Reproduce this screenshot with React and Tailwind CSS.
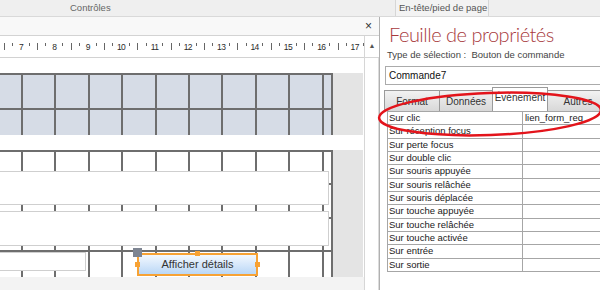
import React from "react";

const units = [null, 7, 8, 9, 10, 11, 12, 13, 14, 15, 16, 17];

function Ruler() {
  return (
    <div className="h-[22px] bg-white border-b border-[#d2d2d2] overflow-hidden">
      <div className="flex h-full ml-[-16.6px]">
        {units.map((u, i) => (
          <div key={i} className="flex h-full shrink-0">
            <div className="w-[8.35px] shrink-0 flex justify-center pt-[6px] text-[8.5px] leading-[10px] text-[#2a2a2a] tracking-[-0.6px] whitespace-nowrap">
              {u}
            </div>
            <div className="w-[8.35px] shrink-0 flex justify-center pt-[7px]">
              <div className="w-px h-[3px] bg-[#666]" />
            </div>
            <div className="w-[8.35px] shrink-0 flex justify-center pt-[7px]">
              <div className="w-px h-[7px] bg-[#666]" />
            </div>
            <div className="w-[8.35px] shrink-0 flex justify-center pt-[7px]">
              <div className="w-px h-[3px] bg-[#666]" />
            </div>
          </div>
        ))}
      </div>
    </div>
  );
}

function Cells() {
  return (
    <div className="flex h-full">
      <div className="w-[21px] shrink-0" />
      {Array.from({ length: 9 }).map((_, i) => (
        <div key={i} className="w-[33.4px] shrink-0 border-l-2 border-[#6e6e6e]" />
      ))}
      <div className="w-[11.6px] shrink-0 border-x-2 border-[#6e6e6e]" />
    </div>
  );
}

const props = [
  ["Sur clic", "lien_form_req"],
  ["Sur réception focus", ""],
  ["Sur perte focus", ""],
  ["Sur double clic", ""],
  ["Sur souris appuyée", ""],
  ["Sur souris relâchée", ""],
  ["Sur souris déplacée", ""],
  ["Sur touche appuyée", ""],
  ["Sur touche relâchée", ""],
  ["Sur touche activée", ""],
  ["Sur entrée", ""],
  ["Sur sortie", ""],
];

export default function App() {
  return (
    <div className="relative w-[600px] h-[290px] overflow-hidden bg-[#f0f0f0] font-['Liberation_Sans',sans-serif] text-[#222]">
      {/* top strip */}
      <div className="flex h-[17px] border-b border-[#d9d9d9] bg-[#efefef]">
        <div className="w-[395px] shrink-0 pl-[70px] text-[9.5px] leading-[16px] text-[#666]">Contrôles</div>
        <div className="w-[94px] shrink-0 border-x border-[#d6d6d6] bg-[#f3f3f3] pl-[3px] text-[9.5px] leading-[16px] text-[#555] whitespace-nowrap">
          En-tête/pied de page
        </div>
      </div>

      <div className="flex h-[273px]">
        {/* left designer panel */}
        <div className="w-[379px] shrink-0 flex flex-col bg-white">
          <div className="h-[19px] shrink-0 bg-[#f8f8f8] border-b border-[#d3d3d3] flex items-center justify-end pr-[7px] text-[12px] leading-none text-[#333]">
            ×
          </div>
          <div className="flex flex-1 min-h-0">
            <div className="w-[364px] shrink-0 flex flex-col overflow-hidden">
              <Ruler />
              <div className="h-[15px] shrink-0 bg-white" />
              {/* section 1 */}
              <div className="flex h-[62px] shrink-0">
                <div className="w-[333px] shrink-0 bg-[#d6dce6] overflow-hidden">
                  <div className="h-[35px] border-t-2 border-[#6e6e6e]">
                    <Cells />
                  </div>
                  <div className="h-[27px] border-t-2 border-[#6e6e6e]">
                    <Cells />
                  </div>
                </div>
                <div className="flex-1 bg-[#e4e4e4] mr-[1px]" />
              </div>
              <div className="h-[15px] shrink-0 bg-white" />
              {/* section 2 */}
              <div className="flex h-[127px] shrink-0">
                <div className="relative w-[333px] shrink-0 bg-white">
                  <div className="overflow-hidden h-full">
                    <div className="h-[33.4px] border-t-2 border-[#6e6e6e]"><Cells /></div>
                    <div className="h-[33.4px] border-t-2 border-[#6e6e6e]"><Cells /></div>
                    <div className="h-[33.4px] border-t-2 border-[#6e6e6e]"><Cells /></div>
                    <div className="h-[26.8px] border-t-2 border-[#6e6e6e]"><Cells /></div>
                  </div>
                  {/* controls on the design canvas */}
                  <div className="absolute left-[-2px] top-[21px] w-[331px] h-[34px] border border-[#cfcfcf] bg-white" />
                  <div className="absolute left-[-2px] top-[61px] w-[331px] h-[35px] border border-[#cfcfcf] bg-white" />
                  <div className="absolute left-[-2px] top-[102px] w-[88px] h-[19px] border border-[#cfcfcf] bg-white" />
                  <div className="absolute left-[137px] top-[103px] w-[121px] h-[23px] border-2 border-[#f7a234] bg-gradient-to-b from-[#f3f8fe] to-[#bad7f6] flex items-center justify-center text-[11px] text-[#333]">
                    Afficher détails
                  </div>
                  <div className="absolute left-[133px] top-[98px] w-[9px] h-[9px] bg-[#7e8592]" />
                  <div className="absolute left-[195px] top-[101px] w-[5px] h-[5px] bg-[#f7a234]" />
                  <div className="absolute left-[135px] top-[112px] w-[5px] h-[5px] bg-[#f7a234]" />
                  <div className="absolute left-[255px] top-[112px] w-[5px] h-[5px] bg-[#f7a234]" />
                </div>
                <div className="flex-1 bg-[#e4e4e4] mr-[1px]" />
              </div>
              <div className="flex-1 bg-[#f3f3f3]" />
            </div>
            {/* scrollbar */}
            <div className="flex-1 flex flex-col border-l border-[#d6d6d6] bg-white">
              <div className="h-[22px] shrink-0 border-b border-[#d6d6d6] flex items-center justify-center text-[7px] text-[#555]">
                ▲
              </div>
              <div className="flex-1 border-r border-[#dcdcdc]" />
            </div>
          </div>
        </div>

        {/* property sheet */}
        <div className="flex-1 bg-white border-l border-[#b0b0b0] pl-[5px] overflow-hidden">
          <div className="pt-[5px] pl-[4px] text-[20px] leading-[25px] tracking-[-0.5px] text-[#a83a3d] font-light font-['Lato',sans-serif] whitespace-nowrap">
            Feuille de propriétés
          </div>
          <div className="mt-[2px] pl-[2px] text-[9.5px] leading-[12px] text-[#444] whitespace-nowrap">
            Type de sélection :&nbsp; Bouton de commande
          </div>
          <div className="mt-[5px] h-[19px] w-[230px] border border-[#ababab] pl-[3px] text-[10px] leading-[17px] text-[#111]">
            Commande7
          </div>
          <div className="mt-[2px] ml-[-1px] flex items-end h-[24px] text-[10px] text-[#333]">
            <div className="w-[55px] h-[21px] shrink-0 border-l border-t border-[#9a9a9a] bg-gradient-to-b from-[#f2f2f2] to-[#d8d8d8] flex items-center justify-center">
              Format
            </div>
            <div className="w-[53px] h-[21px] shrink-0 border-l border-t border-[#9a9a9a] bg-gradient-to-b from-[#f2f2f2] to-[#d8d8d8] flex items-center justify-center">
              Données
            </div>
            <div className="w-[56px] h-[24px] shrink-0 border-x border-t border-[#9a9a9a] bg-white flex items-start pt-[2px] justify-center">
              Événement
            </div>
            <div className="w-[60px] h-[21px] shrink-0 border-t border-[#9a9a9a] bg-gradient-to-b from-[#f2f2f2] to-[#d8d8d8] flex items-center justify-center">
              Autres
            </div>
          </div>
          <div className="ml-[2px] w-[230px] border-t border-l border-[#a6a6a6]">
            {props.map(([k, v]) => (
              <div key={k} className="flex h-[13.35px] border-b border-[#a6a6a6]">
                <div className="w-[135px] shrink-0 border-r border-[#a6a6a6] pl-[1px] text-[9.5px] leading-[12.5px] text-[#1a1a1a] whitespace-nowrap">
                  {k}
                </div>
                <div className="flex-1 pl-[2px] text-[9.5px] leading-[12.5px] text-[#1a1a1a] whitespace-nowrap">{v}</div>
              </div>
            ))}
          </div>
        </div>
      </div>

      <svg className="absolute left-0 top-0 pointer-events-none" width="600" height="290" viewBox="0 0 600 290">
        <ellipse cx="490" cy="114" rx="111" ry="21" transform="rotate(-2 490 114)" fill="none" stroke="#e3141b" strokeWidth="2.5" />
      </svg>
    </div>
  );
}
